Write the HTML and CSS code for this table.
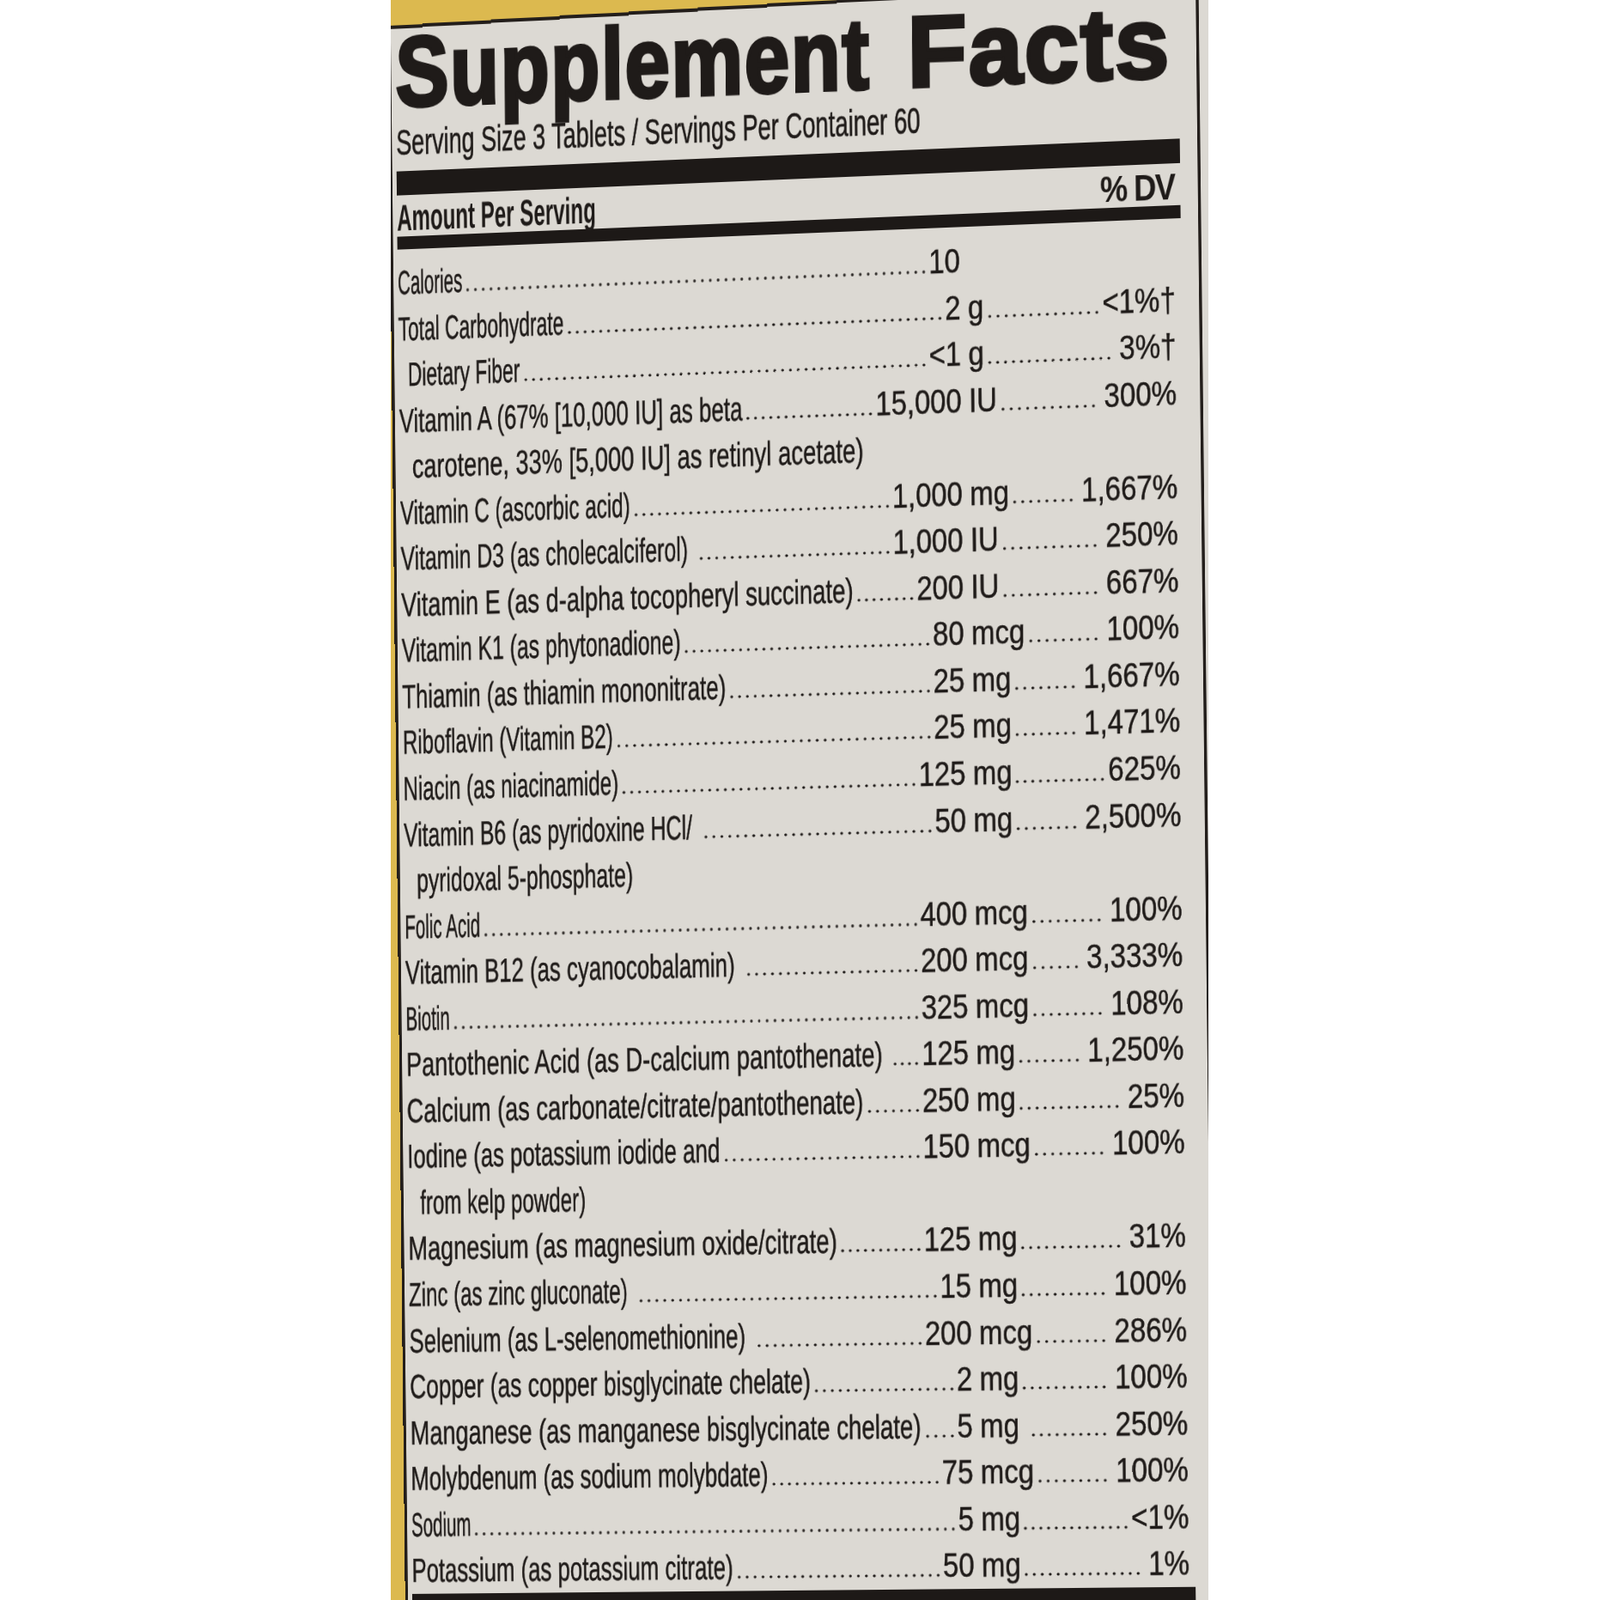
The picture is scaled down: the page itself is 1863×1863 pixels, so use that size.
FILE: index.html
```html
<!DOCTYPE html>
<html lang="en">
<head>
<meta charset="utf-8">
<title>Supplement Facts</title>
<link rel="stylesheet" href="styles.css">
</head>
<body>
<div class="page">
  <div class="strip">
    <div class="persp">
      <div class="label">
        <div class="frame">
          <h1 class="title"><span class="w1">Supplement</span> <span class="w2">Facts</span></h1>
          <p class="serving"><span class="sq sq-serv">Serving Size 3 Tablets / Servings Per Container 60</span></p>
          <div class="bar thick"></div>
          <div class="head"><span class="sq sq-amt">Amount Per Serving</span><span class="dvh">% DV</span></div>
          <div class="bar thin"></div>
          <div class="rows">
            <div class="row"><div class="nm"><div class="ni k64"><span class="t">Calories</span><span class="dots"></span></div></div><span class="num">10</span><div class="val"></div></div>
            <div class="row"><div class="nm"><div class="ni k71"><span class="t">Total Carbohydrate</span><span class="dots"></span></div></div><span class="num">2</span><div class="val"><span class="u">g</span><span class="dots tight"></span><span class="dv">&lt;1%†</span></div></div>
            <div class="row"><div class="nm"><div class="ni k71"><span class="t ind">Dietary Fiber</span><span class="dots"></span></div></div><span class="num">&lt;1</span><div class="val"><span class="u">g</span><span class="dots"></span><span class="dv">3%†</span></div></div>
            <div class="row"><div class="nm"><div class="ni k80"><span class="t">Vitamin A (67% [10,000 IU] as beta</span><span class="dots"></span></div></div><span class="num">15,000</span><div class="val"><span class="u">IU</span><span class="dots"></span><span class="dv">300%</span></div></div>
            <div class="row cont"><div class="nm"><div class="ni k84"><span class="t ind2">carotene, 33% [5,000 IU] as retinyl acetate)</span></div></div><div class="val"></div></div>
            <div class="row"><div class="nm"><div class="ni k75"><span class="t">Vitamin C (ascorbic acid)</span><span class="dots"></span></div></div><span class="num">1,000</span><div class="val"><span class="u">mg</span><span class="dots"></span><span class="dv">1,667%</span></div></div>
            <div class="row"><div class="nm"><div class="ni k77"><span class="t">Vitamin D3 (as cholecalciferol)</span><span class="dots gap"></span></div></div><span class="num">1,000</span><div class="val"><span class="u">IU</span><span class="dots"></span><span class="dv">250%</span></div></div>
            <div class="row"><div class="nm"><div class="ni k84"><span class="t">Vitamin E (as d-alpha tocopheryl succinate)</span><span class="dots"></span></div></div><span class="num">200</span><div class="val"><span class="u">IU</span><span class="dots"></span><span class="dv">667%</span></div></div>
            <div class="row"><div class="nm"><div class="ni k77"><span class="t">Vitamin K1 (as phytonadione)</span><span class="dots"></span></div></div><span class="num">80</span><div class="val"><span class="u">mcg</span><span class="dots"></span><span class="dv">100%</span></div></div>
            <div class="row"><div class="nm"><div class="ni k80"><span class="t">Thiamin (as thiamin mononitrate)</span><span class="dots"></span></div></div><span class="num">25</span><div class="val"><span class="u">mg</span><span class="dots"></span><span class="dv">1,667%</span></div></div>
            <div class="row"><div class="nm"><div class="ni k75"><span class="t">Riboflavin (Vitamin B2)</span><span class="dots"></span></div></div><span class="num">25</span><div class="val"><span class="u">mg</span><span class="dots"></span><span class="dv">1,471%</span></div></div>
            <div class="row"><div class="nm"><div class="ni k75"><span class="t">Niacin (as niacinamide)</span><span class="dots"></span></div></div><span class="num">125</span><div class="val"><span class="u">mg</span><span class="dots tight"></span><span class="dv">625%</span></div></div>
            <div class="row"><div class="nm"><div class="ni k77"><span class="t">Vitamin B6 (as pyridoxine HCl/</span><span class="dots gap"></span></div></div><span class="num">50</span><div class="val"><span class="u">mg</span><span class="dots"></span><span class="dv">2,500%</span></div></div>
            <div class="row cont"><div class="nm"><div class="ni k77"><span class="t ind2">pyridoxal 5-phosphate)</span></div></div><div class="val"></div></div>
            <div class="row"><div class="nm"><div class="ni k64"><span class="t">Folic Acid</span><span class="dots"></span></div></div><span class="num">400</span><div class="val"><span class="u">mcg</span><span class="dots"></span><span class="dv">100%</span></div></div>
            <div class="row"><div class="nm"><div class="ni k80"><span class="t">Vitamin B12 (as cyanocobalamin)</span><span class="dots gap"></span></div></div><span class="num">200</span><div class="val"><span class="u">mcg</span><span class="dots"></span><span class="dv">3,333%</span></div></div>
            <div class="row"><div class="nm"><div class="ni k64"><span class="t">Biotin</span><span class="dots"></span></div></div><span class="num">325</span><div class="val"><span class="u">mcg</span><span class="dots"></span><span class="dv">108%</span></div></div>
            <div class="row"><div class="nm"><div class="ni k84"><span class="t">Pantothenic Acid (as D-calcium pantothenate)</span><span class="dots gap"></span></div></div><span class="num">125</span><div class="val"><span class="u">mg</span><span class="dots"></span><span class="dv">1,250%</span></div></div>
            <div class="row"><div class="nm"><div class="ni k84"><span class="t">Calcium (as carbonate/citrate/pantothenate)</span><span class="dots"></span></div></div><span class="num">250</span><div class="val"><span class="u">mg</span><span class="dots"></span><span class="dv">25%</span></div></div>
            <div class="row"><div class="nm"><div class="ni k80"><span class="t">Iodine (as potassium iodide and</span><span class="dots"></span></div></div><span class="num">150</span><div class="val"><span class="u">mcg</span><span class="dots"></span><span class="dv">100%</span></div></div>
            <div class="row cont"><div class="nm"><div class="ni k75"><span class="t ind2">from kelp powder)</span></div></div><div class="val"></div></div>
            <div class="row"><div class="nm"><div class="ni k84"><span class="t">Magnesium (as magnesium oxide/citrate)</span><span class="dots"></span></div></div><span class="num">125</span><div class="val"><span class="u">mg</span><span class="dots"></span><span class="dv">31%</span></div></div>
            <div class="row"><div class="nm"><div class="ni k75"><span class="t">Zinc (as zinc gluconate)</span><span class="dots gap"></span></div></div><span class="num">15</span><div class="val"><span class="u">mg</span><span class="dots"></span><span class="dv">100%</span></div></div>
            <div class="row"><div class="nm"><div class="ni k80"><span class="t">Selenium (as L-selenomethionine)</span><span class="dots gap"></span></div></div><span class="num">200</span><div class="val"><span class="u">mcg</span><span class="dots"></span><span class="dv">286%</span></div></div>
            <div class="row"><div class="nm"><div class="ni k82"><span class="t">Copper (as copper bisglycinate chelate)</span><span class="dots"></span></div></div><span class="num">2</span><div class="val"><span class="u">mg</span><span class="dots"></span><span class="dv">100%</span></div></div>
            <div class="row"><div class="nm"><div class="ni k84"><span class="t">Manganese (as manganese bisglycinate chelate)</span><span class="dots"></span></div></div><span class="num">5</span><div class="val"><span class="u">mg</span><span class="dots gap"></span><span class="dv">250%</span></div></div>
            <div class="row"><div class="nm"><div class="ni k80"><span class="t">Molybdenum (as sodium molybdate)</span><span class="dots"></span></div></div><span class="num">75</span><div class="val"><span class="u">mcg</span><span class="dots"></span><span class="dv">100%</span></div></div>
            <div class="row"><div class="nm"><div class="ni k64"><span class="t">Sodium</span><span class="dots"></span></div></div><span class="num">5</span><div class="val"><span class="u">mg</span><span class="dots tight"></span><span class="dv">&lt;1%</span></div></div>
            <div class="row"><div class="nm"><div class="ni k80"><span class="t">Potassium (as potassium citrate)</span><span class="dots"></span></div></div><span class="num">50</span><div class="val"><span class="u">mg</span><span class="dots"></span><span class="dv">1%</span></div></div>
          </div>
          <div class="bar bottom"></div>
        </div>
      </div>
    </div>
  </div>
</div>
</body>
</html>
```
FILE: styles.css
```css
html, body {
  margin: 0;
  padding: 0;
  background: #ffffff;
}

.page {
  width: 1863px;
  height: 1863px;
  overflow: hidden;
  background: #ffffff;
  padding-left: 455px;
  box-sizing: border-box;
}

.strip {
  width: 952px;
  height: 1863px;
  background: #dcb94f;
  overflow: hidden;
}

/* photographic perspective of the label on the bottle */
.persp {
  width: 1170px;
  padding-top: 78px;
  transform-origin: 0 0;
  transform: matrix3d(0.82, -0.037706, 0, -0.000016344,
                      0.011, 1, 0, 0,
                      0, 0, 1, 0,
                      -4.4, -60, 0, 1);
  font-family: "Liberation Sans", Arial, sans-serif;
  color: #1f1b19;
}

/* cream label with a slightly steeper top edge (dark rule) */
.label {
  padding-top: 12px;
  padding-right: 40px;
  background: linear-gradient(179.41deg, rgba(220, 217, 211, 0) 12px, #231e1b 12px, #231e1b 16px, #dcd9d3 16px);
}

.frame {
  width: 1092px;
  border-left: 4px solid #231e1b;
  border-right: 4px solid #231e1b;
  padding: 4px 24px 0 6px;
}

.title {
  margin: -7px 0 0;
  font-size: 116px;
  line-height: 100px;
  font-weight: 700;
  letter-spacing: 2px;
  -webkit-text-stroke: 4px #1f1b19;
  white-space: nowrap;
  transform: translateY(7.5px) rotate(0.25deg);
  transform-origin: 0 90px;
}

.w1,
.w2 {
  display: inline-block;
  line-height: 80px;
  transform-origin: 0 50%;
}

.w1 {
  transform: scaleX(0.975);
}

.w2 {
  transform: scaleX(1.16);
}

.serving {
  margin: 16px 0 0;
  font-size: 42px;
  line-height: 48px;
  white-space: nowrap;
  -webkit-text-stroke: 0.6px #1f1b19;
}

.sq {
  display: inline-block;
  white-space: nowrap;
  transform-origin: 0 50%;
}

.sq-serv {
  transform: scaleX(0.78);
}

.sq-amt {
  transform: scaleX(0.68);
}

.bar {
  background: #1d1917;
}

.bar.thick {
  margin-top: 9px;
  height: 28px;
}

.bar.thin {
  height: 15px;
}

.bar.bottom {
  height: 40px;
}

.head {
  margin-top: 4px;
  display: flex;
  justify-content: space-between;
  align-items: baseline;
  padding-right: 8px;
  font-size: 43px;
  line-height: 44px;
  font-weight: 700;
}

.dvh {
  letter-spacing: -2px;
  white-space: nowrap;
}

.rows {
  margin-top: 12px;
}

.row {
  display: flex;
  height: 53.55px;
  line-height: 53.55px;
  font-size: 39px;
  padding-right: 8px;
  white-space: nowrap;
  -webkit-text-stroke: 0.5px #1f1b19;
}

.nm {
  flex: 1 1 0;
  min-width: 0;
  overflow: hidden;
}

.ni {
  --k: 0.8;
  width: calc(100% / var(--k));
  display: flex;
  transform: scaleX(var(--k));
  transform-origin: 0 0;
}

.ni.k64 { --k: 0.64; }
.ni.k71 { --k: 0.71; }
.ni.k75 { --k: 0.75; }
.ni.k77 { --k: 0.77; }
.ni.k80 { --k: 0.8; }
.ni.k82 { --k: 0.82; }
.ni.k84 { --k: 0.845; }

.t {
  flex: none;
}

.t.ind {
  padding-left: calc(13px / var(--k));
}

.t.ind2 {
  padding-left: calc(17.6px / var(--k));
}

.dots {
  flex: 1 1 0;
  min-width: 0;
  margin: 0 2px 0 3px;
  background-image: radial-gradient(2.5px 2px at 50% 50%, #1f1b19 0, #1f1b19 55%, rgba(31, 27, 25, 0) 100%);
  background-size: 11px 6px;
  background-position: right 0 top 35px;
  background-repeat: round no-repeat;
}

.ni .dots {
  background-image: radial-gradient(calc(2.5px / var(--k)) 2px at 50% 50%, #1f1b19 0, #1f1b19 55%, rgba(31, 27, 25, 0) 100%);
  background-size: calc(11px / var(--k)) 6px;
}

.ni .dots.gap {
  margin-left: calc(13px / var(--k));
}

.num {
  flex: none;
}

.val {
  flex: none;
  width: 296px;
  display: flex;
}

.u {
  margin-left: 10px;
}

.val .dots {
  margin: 0 9px 0 2px;
}

.val .dots.tight {
  margin-right: 2px;
}

.val .dots.gap {
  margin-left: 14px;
}

.dv {
  flex: none;
}
```
